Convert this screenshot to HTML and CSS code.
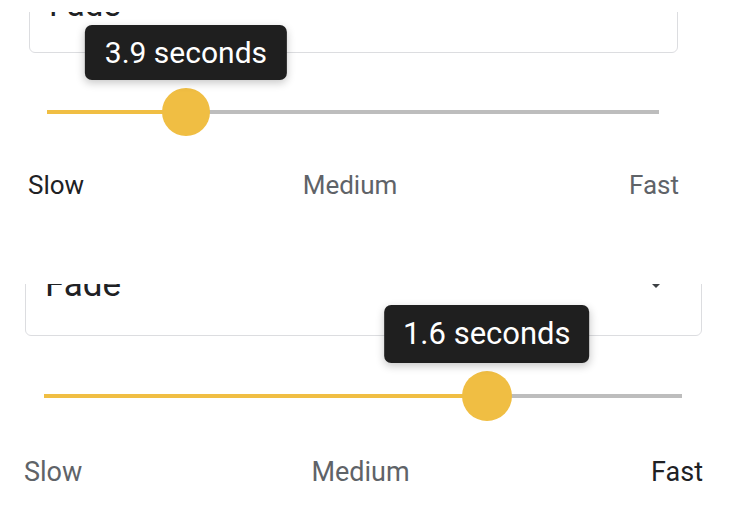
FILE: index.html
```html
<!DOCTYPE html>
<html lang="en">
<head>
<meta charset="utf-8">
<title>Speed sliders</title>
<link rel="stylesheet" href="styles.css">
</head>
<body>
<section class="shot shot-a">
  <div class="field-clip">
    <div class="field">
      <span class="field-value">Fade</span>
      <span class="caret"></span>
    </div>
  </div>
  <div class="slider">
    <div class="track"><div class="fill" style="width:22.7%"></div></div>
    <div class="thumb" style="left:22.7%"></div>
    <div class="bubble" style="left:22.7%">3.9 seconds</div>
  </div>
  <div class="labels">
    <span class="lbl lbl-start on">Slow</span>
    <span class="lbl lbl-mid">Medium</span>
    <span class="lbl lbl-end">Fast</span>
  </div>
</section>

<section class="shot shot-b">
  <div class="field-clip">
    <div class="field">
      <span class="field-value">Fade</span>
      <span class="caret"></span>
    </div>
  </div>
  <div class="slider">
    <div class="track"><div class="fill" style="width:69.4%"></div></div>
    <div class="thumb" style="left:69.4%"></div>
    <div class="bubble" style="left:69.4%">1.6 seconds</div>
  </div>
  <div class="labels">
    <span class="lbl lbl-start">Slow</span>
    <span class="lbl lbl-mid">Medium</span>
    <span class="lbl lbl-end on">Fast</span>
  </div>
</section>
</body>
</html>
```

FILE: styles.css
```css
html, body {
  margin: 0;
  padding: 0;
  background: #ffffff;
}

body {
  width: 730px;
  height: 516px;
  overflow: hidden;
  font-family: Roboto, "Noto Sans", "Liberation Sans", sans-serif;
  color: #202124;
}

.shot {
  display: block;
}

/* ---------- select field (cropped at the top) ---------- */
.field-clip {
  overflow: hidden;
}

.field {
  box-sizing: border-box;
  display: flex;
  justify-content: space-between;
  align-items: flex-start;
  border: 1px solid #dcdde0;
  border-radius: 6px;
  background: #fff;
}

.field-value {
  line-height: 1;
  color: #202124;
}

.caret {
  width: 0;
  height: 0;
  border-left: 5px solid transparent;
  border-right: 5px solid transparent;
  border-top: 5px solid #3c4043;
}

/* ---------- slider ---------- */
.slider {
  position: relative;
  display: flex;
  align-items: center;
}

.track {
  width: 100%;
  height: 4px;
  background: #bdbdbd;
}

.fill {
  height: 100%;
  background: #f0be43;
}

.thumb {
  position: absolute;
  top: 0;
  border-radius: 50%;
  background: #f0be43;
}

.bubble {
  position: absolute;
  transform: translateX(-50%);
  white-space: nowrap;
  background: #1f1f1f;
  color: #ffffff;
  border-radius: 7px;
  box-shadow: 0 3px 8px rgba(0, 0, 0, 0.22);
}

/* ---------- labels ---------- */
.labels {
  display: grid;
  grid-template-columns: 1fr auto 1fr;
  color: #5f6368;
}

.lbl-start { justify-self: start; }
.lbl-end { justify-self: end; }

.lbl.on {
  color: #202124;
}

/* ---------- first screenshot ---------- */
.shot-a {
  padding-top: 12px;
}

.shot-a .field-clip {
  height: 41px;
  margin: 0 52px 0 29px;
}

.shot-a .field {
  height: 70px;
  margin-top: -29px;
  padding: 4px 40px 0 19px;
}

.shot-a .field-value {
  font-size: 33px;
}

.shot-a .caret {
  margin-top: 15px;
}

.shot-a .slider {
  height: 48px;
  margin: 35px 71px 0 47px;
}

.shot-a .thumb {
  width: 48px;
  height: 48px;
  margin-left: -24px;
}

.shot-a .bubble {
  bottom: 56px;
  font-size: 30px;
  line-height: 55px;
  padding: 0 20px;
}

.shot-a .labels {
  margin: 34px 51px 0 28px;
  font-size: 26px;
  line-height: 30px;
}

.shot-a .lbl-mid {
  margin-right: 7px;
}

/* ---------- second screenshot ---------- */
.shot-b {
  padding-top: 84px;
}

.shot-b .field-clip {
  height: 52px;
  margin: 0 28px 0 25px;
}

.shot-b .field {
  height: 73px;
  margin-top: -21px;
  padding: 3px 40px 0 19px;
}

.shot-b .field-value {
  font-size: 35px;
}

.shot-b .caret {
  margin-top: 16px;
}

.shot-b .slider {
  height: 50px;
  margin: 35px 48px 0 44px;
}

.shot-b .thumb {
  width: 50px;
  height: 50px;
  margin-left: -25px;
}

.shot-b .bubble {
  bottom: 58px;
  font-size: 31px;
  line-height: 58px;
  padding: 0 19px;
}

.shot-b .labels {
  margin: 35px 27px 0 24px;
  font-size: 27px;
  line-height: 32px;
}

.shot-b .lbl-mid {
  margin-right: 6px;
}
```
